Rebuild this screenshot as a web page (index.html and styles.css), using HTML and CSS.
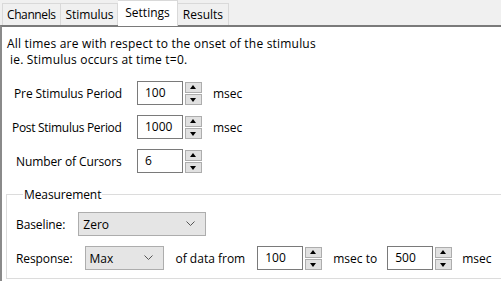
FILE: index.html
```html
<!DOCTYPE html>
<html>
<head>
<meta charset="utf-8">
<link rel="stylesheet" href="styles.css">
</head>
<body>
<div class="window">
  <div class="tabs">
    <div class="tab first">Channels</div>
    <div class="tab stim">Stimulus</div>
    <div class="tab active">Settings</div>
    <div class="tab res">Results</div>
  </div>
  <div class="panel">
    <div class="note">
      <div>All times are with respect to the onset of the stimulus</div>
      <div class="note2">ie. Stimulus occurs at time t=0.</div>
    </div>
    <div class="rows">
      <div class="row">
        <span class="lbl l1">Pre Stimulus Period</span>
        <span class="spin"><span class="box">100</span><span class="btns"><span class="b up"></span><span class="b dn"></span></span></span>
        <span class="unit">msec</span>
      </div>
      <div class="row">
        <span class="lbl l2">Post Stimulus Period</span>
        <span class="spin"><span class="box">1000</span><span class="btns"><span class="b up"></span><span class="b dn"></span></span></span>
        <span class="unit">msec</span>
      </div>
      <div class="row">
        <span class="lbl l3">Number of Cursors</span>
        <span class="spin"><span class="box">6</span><span class="btns"><span class="b up"></span><span class="b dn"></span></span></span>
      </div>
    </div>
    <fieldset class="group">
      <legend>Measurement</legend>
      <div class="grow">
        <span class="glbl">Baseline:</span>
        <span class="combo wide"><span>Zero</span><svg width="9" height="6" viewBox="0 0 9 6"><path d="M0.5 0.5 L4.5 4.5 L8.5 0.5" fill="none" stroke="#555" stroke-width="1"/></svg></span>
      </div>
      <div class="grow g2">
        <span class="glbl">Response:</span>
        <span class="combo narrow"><span>Max</span><svg width="9" height="6" viewBox="0 0 9 6"><path d="M0.5 0.5 L4.5 4.5 L8.5 0.5" fill="none" stroke="#555" stroke-width="1"/></svg></span>
        <span class="txt t1">of data from</span>
        <span class="spin"><span class="box">100</span><span class="btns"><span class="b up"></span><span class="b dn"></span></span></span>
        <span class="txt t2">msec to</span>
        <span class="spin"><span class="box">500</span><span class="btns"><span class="b up"></span><span class="b dn"></span></span></span>
        <span class="txt t3">msec</span>
      </div>
    </fieldset>
  </div>
</div>
</body>
</html>
```

FILE: styles.css
```css
html, body {
  margin: 0;
  padding: 0;
  background: #f0f0f0;
}
body {
  font-family: "Open Sans", "Noto Sans", sans-serif;
  font-size: 12px;
  color: #000;
  width: 501px;
  height: 281px;
  overflow: hidden;
}
.window {
  display: flex;
  flex-direction: column;
  height: 281px;
}
.tabs {
  display: flex;
  align-items: flex-end;
  height: 25px;
  padding-left: 2px;
  background: #f0f0f0;
}
.tab {
  height: 22px;
  line-height: 21px;
  padding: 0 5px;
  border: 1px solid #d9d9d9;
  border-bottom: none;
  border-left: none;
  background: #f0f0f0;
  box-sizing: border-box;
}
.tab.first {
  border-left: 1px solid #d9d9d9;
  padding: 0 4px 0 4px;
  letter-spacing: -0.4px;
}
.tab.stim {
  padding: 0 4px 0 5px;
  letter-spacing: -0.1px;
}
.tab.res {
  padding: 0 5px 0 5px;
}
.tab.active {
  height: 26px;
  margin-bottom: -1px;
  background: #fff;
  position: relative;
  z-index: 1;
  padding: 0 7px 0 7px;
  line-height: 24px;
}
.panel {
  flex: 1;
  background: #fff;
  border-top: 2px solid #7a7a7a;
  border-left: 2px solid #8a8a8a;
  padding: 9px 0 0 5px;
  box-sizing: border-box;
}
.note {
  line-height: 16px;
  letter-spacing: 0.2px;
}
.note2 {
  padding-left: 3px;
}
.rows {
  display: flex;
  flex-direction: column;
  gap: 10px;
  margin-top: 13px;
}
.row {
  display: flex;
  align-items: center;
  height: 24px;
}
.lbl {
  width: 130px;
  box-sizing: border-box;
  flex: none;
  letter-spacing: -0.1px;
}
.l1 { padding-left: 7px; }
.l2 { padding-left: 5px; letter-spacing: -0.3px; }
.l3 { padding-left: 9px; }
.spin {
  display: flex;
  align-items: center;
  gap: 2px;
}
.box {
  width: 46px;
  height: 24px;
  box-sizing: border-box;
  border: 1px solid #7a7a7a;
  padding-left: 7px;
  line-height: 22px;
  background: #fff;
}
.btns {
  display: flex;
  flex-direction: column;
  gap: 1px;
  width: 17px;
}
.b {
  height: 11px;
  box-sizing: border-box;
  background: #e1e1e1;
  border: 1px solid #adadad;
  position: relative;
}
.b::after {
  content: "";
  position: absolute;
  left: 4px;
  width: 0;
  height: 0;
  border-left: 3.5px solid transparent;
  border-right: 3.5px solid transparent;
}
.up::after {
  top: 2px;
  border-bottom: 4px solid #000;
}
.dn::after {
  top: 3px;
  border-top: 4px solid #000;
}
.unit {
  margin-left: 11px;
}
.group {
  margin: 13px 0 0 -1px;
  padding: 9px 0 6px 9px;
  border: 1px solid #dcdcdc;
  border-right: none;
  min-width: 0;
  height: 93px;
  box-sizing: border-box;
}
.group legend {
  padding: 0 1px;
  margin-left: 7px;
  letter-spacing: -0.1px;
}
.grow {
  display: flex;
  align-items: center;
  height: 24px;
}
.g2 {
  margin-top: 10px;
}
.glbl {
  letter-spacing: -0.1px;
}
.combo {
  display: flex;
  align-items: center;
  justify-content: space-between;
  height: 24px;
  box-sizing: border-box;
  background: #e5e5e5;
  border: 1px solid #adadad;
  padding: 0 10px 0 4px;
}
.wide {
  width: 128px;
  margin-left: 13px;
}
.narrow {
  width: 79px;
  margin-left: 12px;
}
.t1 { margin-left: 12px; margin-right: 12px; }
.t2 { margin-left: 11px; margin-right: 10px; }
.t3 { margin-left: 10px; }
```
